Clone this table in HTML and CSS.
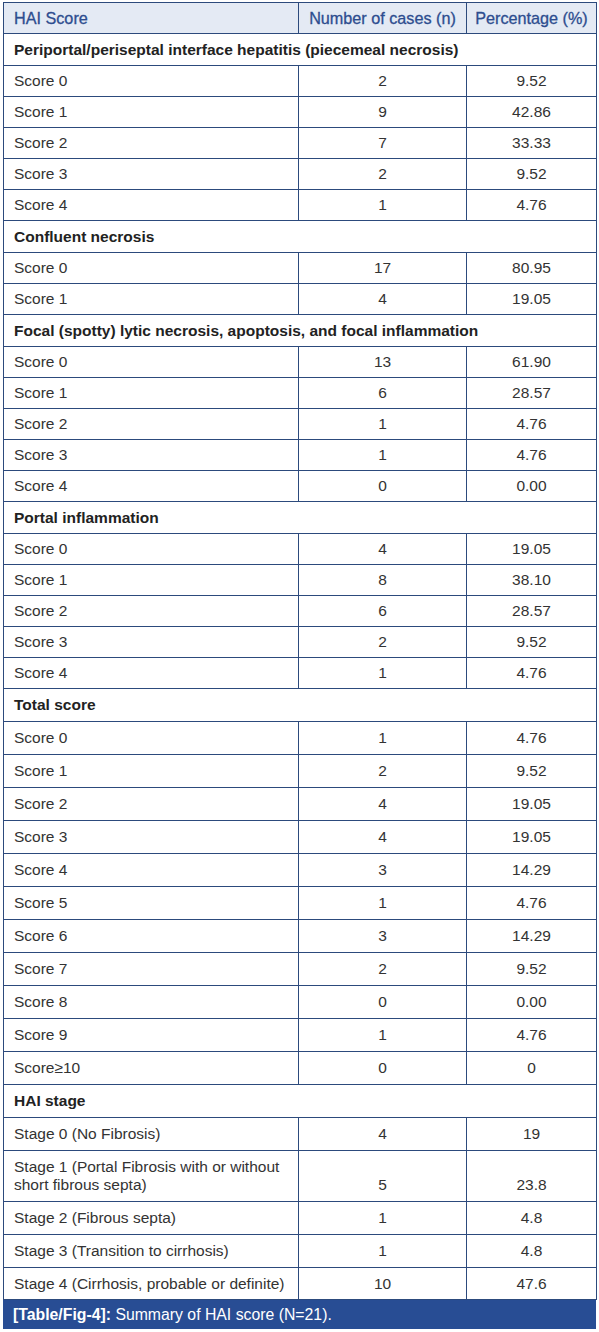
FILE: index.html
```html
<!DOCTYPE html>
<html>
<head>
<meta charset="utf-8">
<link rel="stylesheet" href="styles.css">
</head>
<body>
<div class="wrap">
<table class="hai">
<colgroup><col class="c1"><col class="c2"><col class="c3"></colgroup>
<thead>
<tr class="head"><th class="l">HAI Score</th><th>Number of cases (n)</th><th>Percentage (%)</th></tr>
</thead>
<tbody>
<tr class="sec"><td colspan="3">Periportal/periseptal interface hepatitis (piecemeal necrosis)</td></tr>
<tr><td>Score 0</td><td>2</td><td>9.52</td></tr>
<tr><td>Score 1</td><td>9</td><td>42.86</td></tr>
<tr><td>Score 2</td><td>7</td><td>33.33</td></tr>
<tr><td>Score 3</td><td>2</td><td>9.52</td></tr>
<tr><td>Score 4</td><td>1</td><td>4.76</td></tr>
<tr class="sec"><td colspan="3">Confluent necrosis</td></tr>
<tr><td>Score 0</td><td>17</td><td>80.95</td></tr>
<tr><td>Score 1</td><td>4</td><td>19.05</td></tr>
<tr class="sec"><td colspan="3">Focal (spotty) lytic necrosis, apoptosis, and focal inflammation</td></tr>
<tr><td>Score 0</td><td>13</td><td>61.90</td></tr>
<tr><td>Score 1</td><td>6</td><td>28.57</td></tr>
<tr><td>Score 2</td><td>1</td><td>4.76</td></tr>
<tr><td>Score 3</td><td>1</td><td>4.76</td></tr>
<tr><td>Score 4</td><td>0</td><td>0.00</td></tr>
<tr class="sec"><td colspan="3">Portal inflammation</td></tr>
<tr><td>Score 0</td><td>4</td><td>19.05</td></tr>
<tr><td>Score 1</td><td>8</td><td>38.10</td></tr>
<tr><td>Score 2</td><td>6</td><td>28.57</td></tr>
<tr><td>Score 3</td><td>2</td><td>9.52</td></tr>
<tr><td>Score 4</td><td>1</td><td>4.76</td></tr>
<tr class="sec tall"><td colspan="3">Total score</td></tr>
<tr class="tall"><td>Score 0</td><td>1</td><td>4.76</td></tr>
<tr class="tall"><td>Score 1</td><td>2</td><td>9.52</td></tr>
<tr class="tall"><td>Score 2</td><td>4</td><td>19.05</td></tr>
<tr class="tall"><td>Score 3</td><td>4</td><td>19.05</td></tr>
<tr class="tall"><td>Score 4</td><td>3</td><td>14.29</td></tr>
<tr class="tall"><td>Score 5</td><td>1</td><td>4.76</td></tr>
<tr class="tall"><td>Score 6</td><td>3</td><td>14.29</td></tr>
<tr class="tall"><td>Score 7</td><td>2</td><td>9.52</td></tr>
<tr class="tall"><td>Score 8</td><td>0</td><td>0.00</td></tr>
<tr class="tall"><td>Score 9</td><td>1</td><td>4.76</td></tr>
<tr class="tall"><td>Score≥10</td><td>0</td><td>0</td></tr>
<tr class="sec tall"><td colspan="3">HAI stage</td></tr>
<tr class="tall"><td>Stage 0 (No Fibrosis)</td><td>4</td><td>19</td></tr>
<tr class="two"><td>Stage 1 (Portal Fibrosis with or without short fibrous septa)</td><td>5</td><td>23.8</td></tr>
<tr class="tall"><td>Stage 2 (Fibrous septa)</td><td>1</td><td>4.8</td></tr>
<tr class="tall"><td>Stage 3 (Transition to cirrhosis)</td><td>1</td><td>4.8</td></tr>
<tr class="last"><td>Stage 4 (Cirrhosis, probable or definite)</td><td>10</td><td>47.6</td></tr>
</tbody>
</table>
<div class="caption"><b>[Table/Fig-4]:</b> Summary of HAI score (N=21).</div>
</div>
</body>
</html>
```
FILE: styles.css
```css
html, body {
  margin: 0;
  padding: 0;
  background: #fff;
}
.wrap {
  padding: 2px 0 0 3px;
  width: 593px;
  font-family: "Liberation Sans", Arial, sans-serif;
  font-size: 15.5px;
  color: #333;
}
.hai {
  border-collapse: collapse;
  table-layout: fixed;
  width: 593px;
}
.c1 { width: 295px; }
.c2 { width: 168px; }
.c3 { width: 130px; }
.hai th, .hai td {
  border: 1px solid #2c4a7c;
  height: 31px;
  padding: 0 10px;
  box-sizing: border-box;
  text-align: center;
  vertical-align: middle;
  line-height: 18px;
}
.hai td:first-child, .hai th.l { text-align: left; }
.head th {
  background: #e4eaf4;
  color: #2d4d8f;
  font-weight: normal;
  font-size: 16.2px;
  -webkit-text-stroke: 0.3px #2d4d8f;
  white-space: nowrap;
  padding: 0 4px;
}
.head th.l { padding-left: 10px; }
.sec td {
  height: 32px;
  font-weight: bold;
  color: #222;
  text-align: left;
}
.hai .tall td { height: 33px; }
.hai .last td { height: 32px; }
.hai .two td { height: 51px; vertical-align: bottom; padding-bottom: 7px; }
.hai .two td:first-child { vertical-align: middle; padding-bottom: 0; }
.caption {
  background: #284d94;
  color: #fff;
  height: 29px;
  line-height: 29px;
  padding-left: 10px;
  box-sizing: border-box;
  font-size: 15.8px;
}
```
